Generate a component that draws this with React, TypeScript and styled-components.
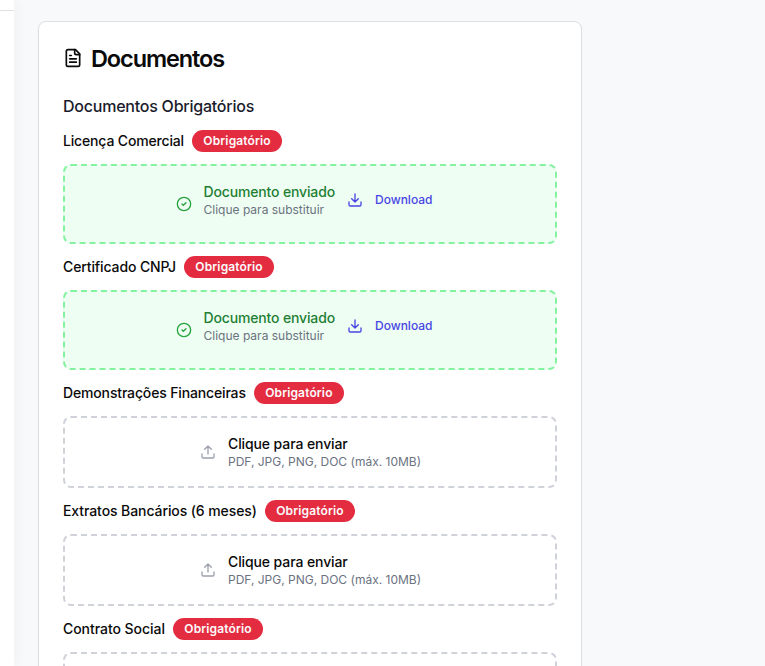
import React from "react";
import styled, { createGlobalStyle } from "styled-components";

const GlobalStyle = createGlobalStyle`
  *, *::before, *::after { box-sizing: border-box; }
  body {
    margin: 0;
    background: #f8f9fb;
    font-family: Inter, "Liberation Sans", sans-serif;
    color: #0a0a0a;
    overflow: hidden;
  }
`;

const Page = styled.div`
  display: flex;
  height: 100vh;
  overflow: hidden;
`;

const Sidebar = styled.aside`
  flex: 0 0 14px;
  background: #fff;
  box-shadow: 0 0 15px rgba(0, 0, 0, 0.05);
`;

const SidebarHeader = styled.div`
  height: 11px;
  border-bottom: 1px solid #e0e0e2;
`;

const Main = styled.main`
  padding: 21px 0 0 24px;
`;

const Card = styled.section`
  width: 544px;
  height: 900px;
  padding: 24px;
  border: 1px solid #dedfe1;
  border-radius: 8px;
  background: #fff;
  box-shadow: 0 1px 2px rgba(0, 0, 0, 0.05);
`;

const CardTitle = styled.h2`
  display: flex;
  align-items: center;
  gap: 8px;
  height: 24px;
  margin: 0;
  font-size: 23.5px;
  line-height: 24px;
  font-weight: 600;
  letter-spacing: -1.1px;
`;

const TitleText = styled.span`
  padding-top: 2px;
`;

const SectionTitle = styled.h3`
  margin: 24px 0 12px;
  font-size: 16px;
  line-height: 24px;
  font-weight: 500;
  letter-spacing: -0.23px;
  color: #1a1c2b;
`;

const DocumentList = styled.div`
  display: flex;
  flex-direction: column;
  gap: 12px;
`;

const LabelRow = styled.div`
  display: flex;
  align-items: center;
  gap: 8px;
  height: 22px;
`;

const Label = styled.span<{ $tracking: number }>`
  font-size: 14px;
  line-height: 20px;
  font-weight: 500;
  letter-spacing: ${(p) => p.$tracking}px;
`;

const Badge = styled.span`
  padding: 3px 11px 3px 11.4px;
  border-radius: 11px;
  background: #e42c41;
  color: #fafafa;
  font-size: 12px;
  line-height: 16px;
  font-weight: 600;
  letter-spacing: 0.14px;
`;

const DropZone = styled.div<{ $sent: boolean }>`
  display: flex;
  align-items: ${(p) => (p.$sent ? "flex-start" : "center")};
  justify-content: center;
  gap: 12px;
  height: ${(p) => (p.$sent ? 80 : 72)}px;
  flex-shrink: 0;
  padding: ${(p) => (p.$sent ? "16px 12px 0 0" : "0 0 0 1px")};
  border: 2px dashed ${(p) => (p.$sent ? "#84f3a0" : "#cfd2d9")};
  border-radius: 8px;
  background: ${(p) => (p.$sent ? "#eefef3" : "#fff")};
`;

const Details = styled.div`
  display: flex;
  flex-direction: column;
`;

const Status = styled.span<{ $sent: boolean }>`
  font-size: 14px;
  line-height: 20px;
  font-weight: 500;
  letter-spacing: ${(p) => (p.$sent ? -0.15 : -0.1)}px;
  color: ${(p) => (p.$sent ? "#1f7e34" : "#0a0a0a")};
`;

const Hint = styled.span`
  font-size: 12px;
  line-height: 16px;
  color: #6b7280;
`;

const StateIcon = styled.span<{ $sent: boolean }>`
  display: flex;
  margin-top: ${(p) => (p.$sent ? 14 : 0)}px;
  color: ${(p) => (p.$sent ? "#27a33e" : "#9ca0ae")};
`;

const DownloadLink = styled.a`
  display: flex;
  align-items: center;
  gap: 12px;
  height: 36px;
  color: #4845e4;
  font-size: 12px;
  line-height: 16px;
  font-weight: 500;
`;

type IconProps = { size?: number; children: React.ReactNode };

const Icon = ({ size = 16, children }: IconProps) => (
  <svg
    width={size}
    height={size}
    viewBox="0 0 24 24"
    fill="none"
    stroke="currentColor"
    strokeWidth="2"
    strokeLinecap="round"
    strokeLinejoin="round"
  >
    {children}
  </svg>
);

const FileIcon = () => (
  <Icon size={20}>
    <path d="M15 2H6a2 2 0 0 0-2 2v16a2 2 0 0 0 2 2h12a2 2 0 0 0 2-2V7Z" />
    <path d="M14 2v4a2 2 0 0 0 2 2h4M10 9H8M16 13H8M16 17H8" />
  </Icon>
);

const CheckIcon = () => (
  <Icon>
    <circle cx="12" cy="12" r="10" />
    <path d="m9 12 2 2 4-4" />
  </Icon>
);

const UploadIcon = () => (
  <Icon>
    <path d="M21 15v4a2 2 0 0 1-2 2H5a2 2 0 0 1-2-2v-4M17 8l-5-5-5 5M12 3v12" />
  </Icon>
);

const DownloadIcon = () => (
  <Icon>
    <path d="M21 15v4a2 2 0 0 1-2 2H5a2 2 0 0 1-2-2v-4M7 10l5 5 5-5M12 15V3" />
  </Icon>
);

const documents = [
  { name: "Licença Comercial", sent: true, tracking: -0.16 },
  { name: "Certificado CNPJ", sent: true, tracking: -0.12 },
  { name: "Demonstrações Financeiras", sent: false, tracking: -0.15 },
  { name: "Extratos Bancários (6 meses)", sent: false, tracking: -0.09 },
  { name: "Contrato Social", sent: false, tracking: -0.05 },
];

export default function App() {
  return (
    <Page>
      <GlobalStyle />
      <Sidebar>
        <SidebarHeader />
      </Sidebar>
      <Main>
        <Card>
          <CardTitle>
            <FileIcon />
            <TitleText>Documentos</TitleText>
          </CardTitle>
          <SectionTitle>Documentos Obrigatórios</SectionTitle>
          <DocumentList>
            {documents.map(({ name, sent, tracking }) => (
              <React.Fragment key={name}>
                <LabelRow>
                  <Label $tracking={tracking}>{name}</Label>
                  <Badge>Obrigatório</Badge>
                </LabelRow>
                <DropZone $sent={sent}>
                  <StateIcon $sent={sent}>{sent ? <CheckIcon /> : <UploadIcon />}</StateIcon>
                  <Details>
                    <Status $sent={sent}>{sent ? "Documento enviado" : "Clique para enviar"}</Status>
                    <Hint>{sent ? "Clique para substituir" : "PDF, JPG, PNG, DOC (máx. 10MB)"}</Hint>
                  </Details>
                  {sent && (
                    <DownloadLink>
                      <DownloadIcon />
                      Download
                    </DownloadLink>
                  )}
                </DropZone>
              </React.Fragment>
            ))}
          </DocumentList>
        </Card>
      </Main>
    </Page>
  );
}
